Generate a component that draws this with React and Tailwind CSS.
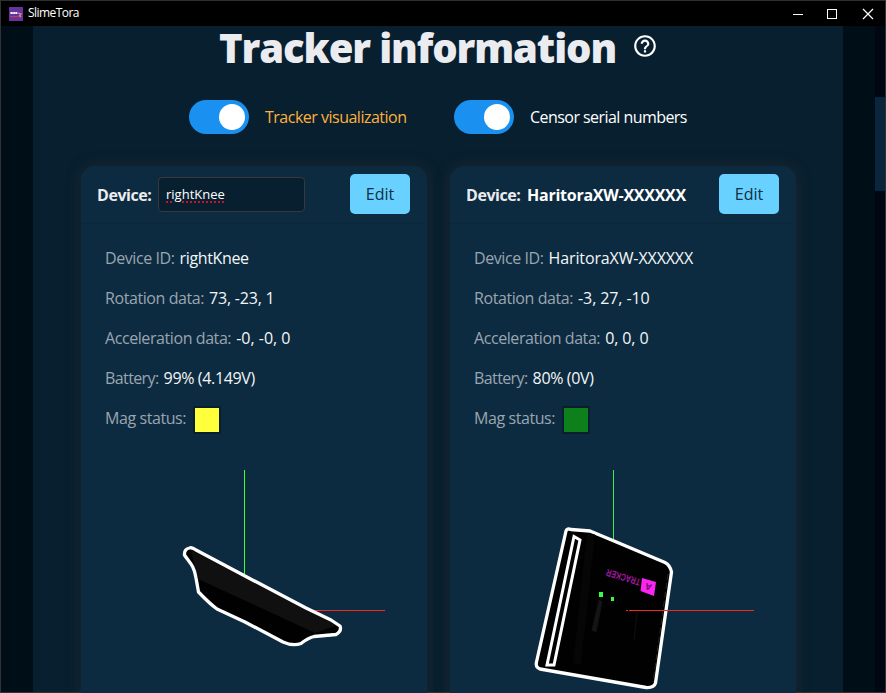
import { MdHelpOutline } from "react-icons/md";

function TitleBar() {
  return (
    <header className="flex h-[26px] shrink-0 items-center border-t border-[#2d2f30] bg-black pl-2">
      <svg className="size-[14px]" viewBox="0 0 14 14">
        <rect width="14" height="14" fill="#65349c" />
        <path d="M1.5 6h6.8" stroke="#fff" strokeWidth="1.8" strokeDasharray="1.5 .3" />
        <path d="M1 9.6h10.5" stroke="#c83f58" strokeWidth="1" />
        <path d="M9 6l3 1-1.5 1.5L12 10" fill="none" stroke="#e58ba0" strokeWidth="1.2" />
      </svg>
      <span className="-mt-px ml-[5px] text-[12px] leading-4 tracking-[-0.55px] text-white">SlimeTora</span>
      <svg className="ml-auto mr-2 h-[14px] w-[84px]" viewBox="0 0 84 14" fill="none" stroke="#fff" shapeRendering="crispEdges">
        <path d="M0 7.5h10" />
        <rect x="34.5" y="2.5" width="9" height="9" />
        <path d="M70 2l10 10M80 2l-10 10" shapeRendering="auto" strokeWidth="1.2" />
      </svg>
    </header>
  );
}

function Toggle({ label, className }) {
  return (
    <div className="flex items-center gap-4">
      <span className="flex h-[34px] w-[60px] items-center justify-end rounded-full bg-[#1a90f1] pr-1">
        <span className="size-[26px] rounded-full bg-white" />
      </span>
      <span className={className}>{label}</span>
    </div>
  );
}

function Row({ label, value, labelClass = "tracking-[-0.42px]", valueClass }) {
  return (
    <p className="flex h-10 items-center gap-[5px] whitespace-nowrap">
      <span className={"text-[#9aa5b1] " + labelClass}>{label}</span>
      <span className={"font-medium text-[#f4f6f8] " + valueClass}>{value}</span>
    </p>
  );
}

function Card({ name, rows, mag, children }) {
  return (
    <section className="h-[560px] w-[346px] shrink-0 rounded-[14px] bg-[#0d2b40] shadow-[0_0_14px_1px_rgba(54,48,48,0.42)]">
      <div className="flex h-[58px] items-center border-b border-[#0b283b] pr-[17px] pl-4">
        <span className="w-[61px] font-bold tracking-[-0.45px] whitespace-nowrap text-[#ebecf0]">Device:</span>
        {name}
        <button className="-mt-[2px] ml-auto h-10 w-[60px] rounded-[5px] bg-[#69d1ff] text-[#102e42]">Edit</button>
      </div>
      <div className="pt-[14px] pl-6">
        {rows}
        <div className="flex h-10 items-center text-[#9aa5b1]">
          <span className="w-[88px] tracking-[-0.42px] whitespace-nowrap">Mag status:</span>
          <span className={"mt-1 size-7 border-2 border-[#081f2f] " + mag} />
        </div>
      </div>
      {children}
    </section>
  );
}

function FlatTracker() {
  return (
    <svg className="mt-[22px] h-[233px] w-[346px]" viewBox="81 460 346 233">
      <path d="M244.5 470v107" stroke="#3cff35" />
      <path d="M314 610.500H385" stroke="#f22a1e" />
      <path d="M189.500 548Q184 549 184.500 555C189 562 194 565 196 578L198.500 592Q210 604 217 609L245 622 283 642Q293 646.500 301 643.500 308 638 314 636.500L336 634.500Q342 631 340 626L331 620 306 608 245 576 196 550Z" fill="#010101" />
      <path d="M191 550 338 625 315 633 198 579Z" fill="#101010" />
      <path d="M189.500 548Q184 549 184.500 555C189 562 194 565 196 578L198.500 592Q210 604 217 609L245 622 283 642Q293 646.500 301 643.500 308 638 314 636.500L336 634.500Q342 631 340 626L331 620 306 608 245 576 196 550Q192 547 189.500 548Z" fill="none" stroke="#fff" strokeWidth="3.3" strokeLinejoin="round" />
    </svg>
  );
}

function UprightTracker() {
  return (
    <svg className="mt-[22px] h-[233px] w-[346px]" viewBox="450 460 346 233">
      <path d="M613.5 470v74" stroke="#3fe850" />
      <path d="M566 531Q567 528 571 529.500L590 531 614 541 665 562.500Q670 565 671.500 572L655.500 683Q654 688 646 687.500L540 669Q535 667 536.500 662Z" fill="#010101" stroke="#fff" strokeWidth="3.3" strokeLinejoin="round" />
      <path d="M591 534 577 664" stroke="#060606" strokeWidth="8" />
      <path d="M574 536.500 580 540 554 665H547Z" fill="#030303" stroke="#fff" strokeWidth="3" />
      <path d="M668 574 653 682" stroke="#252525" strokeDasharray="6 3" />
      <path d="M599 600 602 602 596 632 592 630ZM637 612 634 640" fill="#151515" stroke="#111" />
      <path d="M599 592h4v5h-4zM611 597h3v4h-3z" fill="#36ff43" />
      <path d="M642 578 656 582 654 596 640.500 591Z" fill="#fb25f1" />
      <g transform="translate(640 582) rotate(197)" fontFamily="Liberation Sans" fontWeight="700">
        <text x="0" y="3" fill="#a516a0" fontSize="10" textLength="35" lengthAdjust="spacingAndGlyphs">TRACKER</text>
        <text x="-12.500" y="1" fill="#68105f" fontSize="9">A</text>
      </g>
      <path d="M626 610.500h2M629 610.500H754" stroke="#f22a1e" />
    </svg>
  );
}

export default function App() {
  return (
    <div className="flex h-[693px] w-[886px] flex-col overflow-hidden border-x border-[#303334] bg-[#000e17] font-['Open_Sans','Noto_Sans',sans-serif] text-[16px] text-white">
      <TitleBar />
      <div className="flex min-h-0 flex-1 border-b border-[#303334]">
        <main className="ml-8 w-[810px] shrink-0 bg-[#081f2f]">
          <div className="flex h-[46px] items-center pl-[186px]">
            <h1 className="-mt-[3px] w-[415px] text-[40px] leading-[46px] font-extrabold tracking-[-1.12px] whitespace-nowrap text-[#ebecf0]">Tracker information</h1>
            <MdHelpOutline className="-mt-[6px] -ml-[2px] size-[26px] text-white" />
          </div>
          <div className="mt-7 flex h-[34px] gap-12 pl-[156px]">
            <Toggle label="Tracker visualization" className="w-[141px] tracking-[-0.5px] whitespace-nowrap text-[#ffb13b]" />
            <Toggle label="Censor serial numbers" className="tracking-[-0.55px] whitespace-nowrap" />
          </div>
          <div className="mt-8 flex gap-[23px] pl-12">
            <Card
              mag="bg-[#ffff3c]"
              name={
                <span className="flex h-[35px] w-[147px] items-center rounded-[4px] border border-[#38393d] bg-[#081f2f] pl-[7px] text-[13px]">
                  <span className="underline decoration-[#c41528] decoration-dotted decoration-2 underline-offset-[3px]">rightKnee</span>
                </span>
              }
              rows={
                <>
                  <Row label="Device ID:" value="rightKnee" valueClass="tracking-[-0.35px]" />
                  <Row label="Rotation data:" value="73, -23, 1" valueClass="tracking-[-0.2px]" />
                  <Row label="Acceleration data:" value="-0, -0, 0" />
                  <Row label="Battery:" labelClass="tracking-[-0.6px]" value="99% (4.149V)" valueClass="tracking-[-0.35px]" />
                </>
              }
            >
              <FlatTracker />
            </Card>
            <Card
              mag="bg-[#0e801b]"
              name={<span className="font-bold tracking-[-0.25px] whitespace-nowrap text-white">HaritoraXW-XXXXXX</span>}
              rows={
                <>
                  <Row label="Device ID:" value="HaritoraXW-XXXXXX" valueClass="tracking-[-0.12px]" />
                  <Row label="Rotation data:" value="-3, 27, -10" valueClass="tracking-[-0.1px]" />
                  <Row label="Acceleration data:" value="0, 0, 0" valueClass="tracking-[-0.1px]" />
                  <Row label="Battery:" labelClass="tracking-[-0.6px]" value="80% (0V)" valueClass="tracking-[-0.35px]" />
                </>
              }
            >
              <UprightTracker />
            </Card>
          </div>
        </main>
        <div className="ml-auto w-[10px] bg-[#000712] pt-[71px]">
          <div className="h-[94px] bg-[#0a263c]" />
        </div>
      </div>
    </div>
  );
}
